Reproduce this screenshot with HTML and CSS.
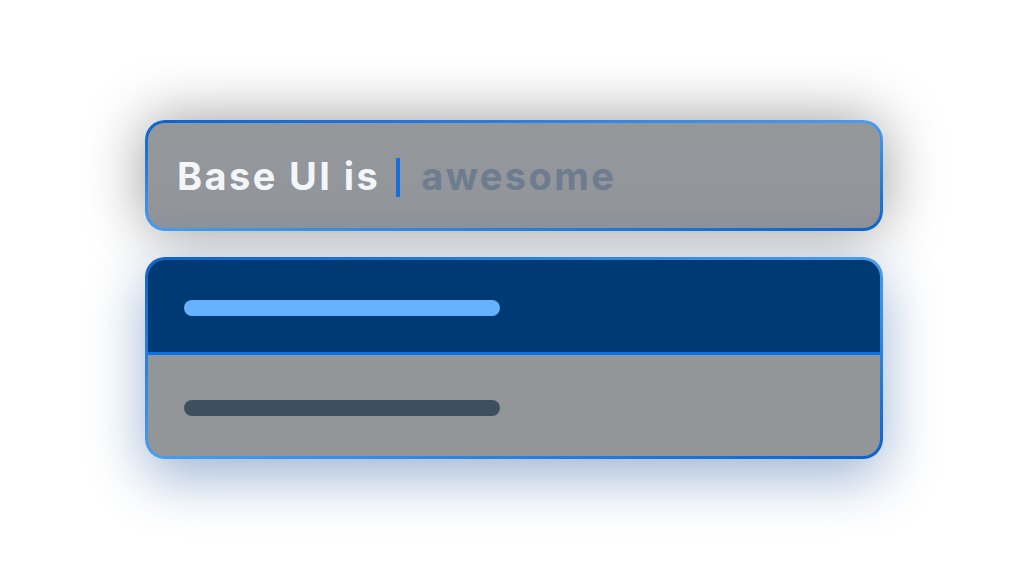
FILE: index.html
```html
<!DOCTYPE html>
<html lang="en">
<head>
<meta charset="utf-8">
<title>Base UI</title>
<link rel="stylesheet" href="styles.css">
</head>
<body>
<main class="stage">
  <div class="input">
    <span class="typed">Base UI is</span>
    <span class="caret"></span>
    <span class="suggest">awesome</span>
  </div>
  <div class="listbox">
    <div class="option option-active"><span class="bar bar-light"></span></div>
    <div class="option"><span class="bar bar-dark"></span></div>
  </div>
</main>
</body>
</html>
```
FILE: styles.css
```css
html, body {
  margin: 0;
  padding: 0;
  background: #ffffff;
  width: 1024px;
  height: 576px;
  overflow: hidden;
}
.stage {
  display: flex;
  flex-direction: column;
  gap: 26px;
  padding-top: 120px;
  padding-left: 145px;
  width: 738px;
}
.input,
.listbox {
  border: 3px solid transparent;
  border-radius: 20px;
  box-sizing: border-box;
}
.input {
  height: 111px;
  display: flex;
  align-items: center;
  padding-left: 29px;
  background:
    linear-gradient(180deg, #95989b 0%, #929599 70%, #8f939a 100%) padding-box,
    linear-gradient(to bottom right, #0b63cc 0%, #4a9cec 50%, #0b63cc 100%) border-box;
  box-shadow: 0 0 60px rgba(0, 0, 0, 0.4);
  font-family: Inter, "Noto Sans", sans-serif;
  font-weight: 700;
  font-size: 38px;
  letter-spacing: 2.4px;
}
.typed {
  color: #f3f6f9;
}
.caret {
  width: 4px;
  height: 39px;
  background: #1670dc;
  margin: 0 21px 0 16px;
  position: relative;
  top: 2px;
}
.suggest {
  color: #6d7c8f;
}
.listbox {
  height: 202px;
  overflow: hidden;
  display: flex;
  flex-direction: column;
  background:
    linear-gradient(#929699, #929699) padding-box,
    linear-gradient(to bottom right, #0b63cc 0%, #4a9cec 50%, #0b63cc 100%) border-box;
  box-shadow: 0 18px 56px rgba(20, 75, 150, 0.42);
}
.option {
  flex: 1;
  display: flex;
  align-items: center;
  padding-left: 36px;
  padding-top: 4px;
  box-sizing: border-box;
}
.option-active {
  flex: 0 0 95px;
  background: #003a75;
  border-bottom: 3px solid #0b72e6;
}
.bar {
  display: block;
  width: 316px;
  height: 16px;
  border-radius: 8px;
}
.bar-light {
  background: #66b2ff;
}
.bar-dark {
  background: #3e5060;
}
```
